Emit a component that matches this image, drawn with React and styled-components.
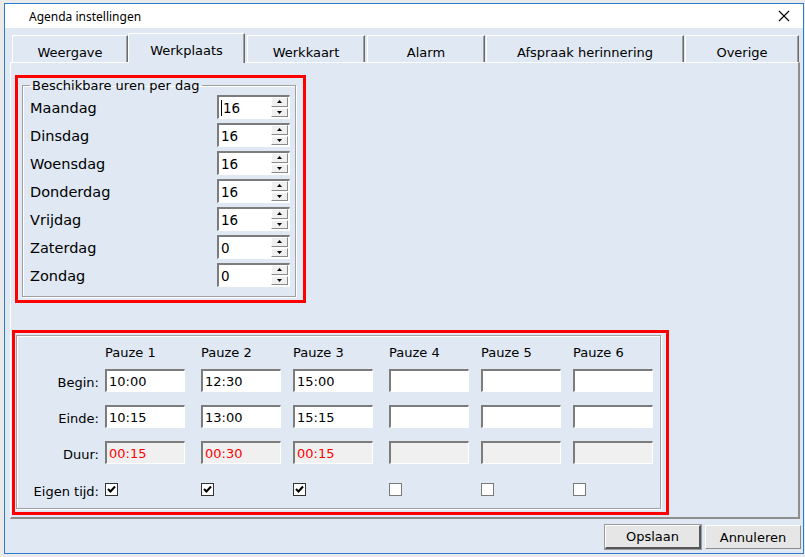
import React from 'react';
import styled, { createGlobalStyle } from 'styled-components';

const GlobalStyle = createGlobalStyle`
  body {
    margin: 0;
    background: #eaeaea;
    font-family: "DejaVu Sans", Verdana, sans-serif;
    color: #000;
  }
`;

const BG = '#dfe8f3';

const tabs = [
  { label: 'Weergave', width: 116, gap: 0 },
  { label: 'Werkplaats', width: 117, gap: 0, active: true },
  { label: 'Werkkaart', width: 118, gap: 2 },
  { label: 'Alarm', width: 118, gap: 2 },
  { label: 'Afspraak herinnering', width: 198, gap: 1 },
  { label: 'Overige', width: 114, gap: 1 },
];

const days = [
  ['Maandag', '16'],
  ['Dinsdag', '16'],
  ['Woensdag', '16'],
  ['Donderdag', '16'],
  ['Vrijdag', '16'],
  ['Zaterdag', '0'],
  ['Zondag', '0'],
];

const pauses = [
  { begin: '10:00', end: '10:15', dur: '00:15', own: true },
  { begin: '12:30', end: '13:00', dur: '00:30', own: true },
  { begin: '15:00', end: '15:15', dur: '00:15', own: true },
  { begin: '', end: '', dur: '', own: false },
  { begin: '', end: '', dur: '', own: false },
  { begin: '', end: '', dur: '', own: false },
];

const Arrow = ({ up }) => (
  <svg width="5" height="3" viewBox="0 0 5 3">
    <polygon points={up ? '2.5,0 5,3 0,3' : '0,0 5,0 2.5,3'} fill="#000" />
  </svg>
);

const Check = () => (
  <svg width="9" height="9" viewBox="0 0 9 9">
    <polyline points="1,4 3.5,6.5 8,1.5" fill="none" stroke="#000" strokeWidth="2" />
  </svg>
);

const App = () => {
  return (
    <>
      <GlobalStyle />
      <Window>
        <TitleBar>
          <Title>Agenda instellingen</Title>
          <Close>
            <svg width="12" height="12" viewBox="0 0 12 12">
              <path d="M1 1 L11 11 M11 1 L1 11" stroke="#000" strokeWidth="1.1" />
            </svg>
          </Close>
        </TitleBar>
        <Body>
          <TabStrip>
            {tabs.map((t) => (
              <Tab key={t.label} $width={t.width} $gap={t.gap} $active={t.active}>
                {t.label}
              </Tab>
            ))}
          </TabStrip>
          <Panel>
            <Highlight $ml={4} $w={291} $h={228}>
              <Group>
                <Legend>Beschikbare uren per dag</Legend>
                {days.map(([day, val], i) => (
                  <DayRow key={day}>
                    <DayLabel>{day}</DayLabel>
                    <Spin>
                      <SpinText>
                        {i === 0 && <Caret />}
                        {val}
                      </SpinText>
                      <SpinButtons>
                        <SpinBtn><Arrow up /></SpinBtn>
                        <SpinBtn><Arrow /></SpinBtn>
                      </SpinButtons>
                    </Spin>
                  </DayRow>
                ))}
              </Group>
            </Highlight>
            <Highlight $ml={1} $mt={27} $w={657} $h={185}>
              <PauseGroup>
                <PauseRow $h={26}>
                  <span />
                  {pauses.map((p, i) => (
                    <Header key={i}>Pauze {i + 1}</Header>
                  ))}
                </PauseRow>
                <PauseRow $mt={4} $h={23}>
                  <RowLabel>Begin:</RowLabel>
                  {pauses.map((p, i) => (
                    <Field key={i}>{p.begin}</Field>
                  ))}
                </PauseRow>
                <PauseRow $mt={13} $h={23}>
                  <RowLabel>Einde:</RowLabel>
                  {pauses.map((p, i) => (
                    <Field key={i}>{p.end}</Field>
                  ))}
                </PauseRow>
                <PauseRow $mt={13} $h={23}>
                  <RowLabel>Duur:</RowLabel>
                  {pauses.map((p, i) => (
                    <Field key={i} $readOnly>{p.dur}</Field>
                  ))}
                </PauseRow>
                <PauseRow $mt={13} $h={24}>
                  <RowLabel>Eigen tijd:</RowLabel>
                  {pauses.map((p, i) => (
                    <CheckBox key={i} $checked={p.own}>{p.own && <Check />}</CheckBox>
                  ))}
                </PauseRow>
              </PauseGroup>
            </Highlight>
          </Panel>
          <ButtonRow>
            <Button $default>Opslaan</Button>
            <Button>Annuleren</Button>
          </ButtonRow>
        </Body>
      </Window>
    </>
  );
};

export default App;

const Window = styled.div`
  margin: 3px 0 0 4px;
  width: 800px;
  height: 551px;
  box-sizing: border-box;
  border: 1px solid #2b7bd3;
  display: flex;
  flex-direction: column;
  background: ${BG};
`;

const TitleBar = styled.div`
  height: 24px;
  background: #fff;
  display: flex;
  align-items: center;
  justify-content: space-between;
  padding-left: 24px;
`;

const Title = styled.span`
  font-family: "Noto Sans", "Open Sans", sans-serif;
  font-size: 12px;
`;

const Close = styled.div`
  width: 30px;
  margin-right: 4px;
  display: flex;
  justify-content: center;
  align-items: center;
`;

const Body = styled.div`
  flex: 1;
  display: flex;
  flex-direction: column;
  padding: 5px 0 4px 0;
`;

const TabStrip = styled.div`
  display: flex;
  align-items: flex-end;
  height: 29px;
  margin-left: 7px;
`;

const Tab = styled.div`
  box-sizing: border-box;
  width: ${(p) => p.$width}px;
  margin-left: ${(p) => p.$gap}px;
  height: ${(p) => (p.$active ? 30 : 27)}px;
  margin-bottom: ${(p) => (p.$active ? -1 : 0)}px;
  position: relative;
  z-index: ${(p) => (p.$active ? 2 : 0)};
  background: ${BG};
  border-top: 1px solid #fff;
  border-left: 1px solid #fff;
  border-right: 1px solid #6a6a6a;
  box-shadow: inset -1px 0 0 #a0a0a0;
  display: flex;
  justify-content: center;
  align-items: center;
  padding-top: ${(p) => (p.$active ? 3 : 6)}px;
  font-size: 13px;
`;

const Panel = styled.div`
  box-sizing: border-box;
  margin-left: 5px;
  width: 790px;
  height: 457px;
  border-top: 1px solid #fff;
  border-left: 1px solid #fff;
  border-right: 2px solid #8e8e8e;
  border-bottom: 2px solid #8e8e8e;
  padding-top: 12px;
  display: flex;
  flex-direction: column;
`;

const Highlight = styled.div`
  box-sizing: border-box;
  width: ${(p) => p.$w}px;
  height: ${(p) => p.$h}px;
  margin-left: ${(p) => p.$ml || 0}px;
  margin-top: ${(p) => p.$mt || 0}px;
  border: 3px solid #ff0000;
  display: flex;
  flex-direction: column;
`;

const Group = styled.fieldset`
  margin: 0 7px 3px 4px;
  flex: 1;
  min-width: 0;
  padding: 0 5px 5px 7px;
  border: 1px solid #a0a0a0;
  box-shadow: 1px 1px 0 #fff, inset 1px 1px 0 #fff;
`;

const Legend = styled.legend`
  margin-left: 0;
  padding: 0 2px;
  font-size: 13px;
  line-height: 15px;
`;

const DayRow = styled.div`
  display: grid;
  grid-template-columns: 1fr 73px;
  align-items: center;
  height: 28px;
`;

const DayLabel = styled.span`
  font-size: 14.5px;
  padding-top: 2px;
`;

const sunken = `
  box-sizing: border-box;
  border-style: solid;
  border-width: 2px 1px 1px 2px;
  border-color: #7c7c7c #fff #fff #7c7c7c;
`;

const Spin = styled.div`
  ${sunken}
  height: 24px;
  background: #fff;
  display: flex;
  align-items: stretch;
`;

const SpinText = styled.div`
  flex: 1;
  display: flex;
  align-items: center;
  padding-left: 2px;
  font-size: 13.5px;
`;

const Caret = styled.span`
  display: inline-block;
  width: 1px;
  height: 16px;
  background: #000;
  margin-right: 1px;
`;

const SpinButtons = styled.div`
  width: 17px;
  display: flex;
  flex-direction: column;
  gap: 1px;
  padding: 0 1px 1px 0;
`;

const SpinBtn = styled.div`
  flex: 1;
  box-sizing: border-box;
  background: #f0f0f0;
  border-style: solid;
  border-width: 1px;
  border-color: #fff #8a8a8a #8a8a8a #fff;
  display: flex;
  justify-content: center;
  align-items: center;
`;

const PauseGroup = styled.div`
  box-sizing: border-box;
  margin: 2px 5px 3px 1px;
  flex: 1;
  border: 1px solid #a0a0a0;
  box-shadow: 1px 1px 0 #fff, inset 1px 1px 0 #fff;
  padding: 3px 0 7px 0;
  display: flex;
  flex-direction: column;
`;

const PauseRow = styled.div`
  display: grid;
  grid-template-columns: 88px 96px 92px 96px 92px 92px 92px;
  align-items: center;
  height: ${(p) => p.$h}px;
  margin-top: ${(p) => p.$mt || 0}px;
`;

const Header = styled.span`
  font-size: 13px;
`;

const RowLabel = styled.span`
  font-size: 13px;
  text-align: right;
  padding-right: 6px;
  padding-top: 4px;
`;

const Field = styled.div`
  ${sunken}
  width: 80px;
  height: 23px;
  background: ${(p) => (p.$readOnly ? '#f0f0f0' : '#fff')};
  color: ${(p) => (p.$readOnly ? '#ff0000' : '#000')};
  font-size: 13px;
  display: flex;
  align-items: center;
  padding-left: 2px;
`;

const CheckBox = styled.div`
  box-sizing: border-box;
  width: 13px;
  height: 13px;
  background: #fff;
  border: 1px solid ${(p) => (p.$checked ? '#333' : '#7a7a7a')};
  display: flex;
  justify-content: center;
  align-items: center;
`;

const ButtonRow = styled.div`
  display: flex;
  justify-content: flex-end;
  gap: 4px;
  margin: 6px 2px 0 0;
`;

const Button = styled.div`
  box-sizing: border-box;
  width: 96px;
  height: 24px;
  background: #e6e6e6;
  border-style: solid;
  border-width: ${(p) => (p.$default ? '1px 2px 2px 1px' : '1px')};
  border-color: ${(p) =>
    p.$default ? '#fff #555 #555 #fff' : '#fff #8a8a8a #8a8a8a #fff'};
  outline: ${(p) => (p.$default ? '1px solid #9a9a9a' : 'none')};
  display: flex;
  justify-content: center;
  align-items: center;
  font-size: 13px;
`;
